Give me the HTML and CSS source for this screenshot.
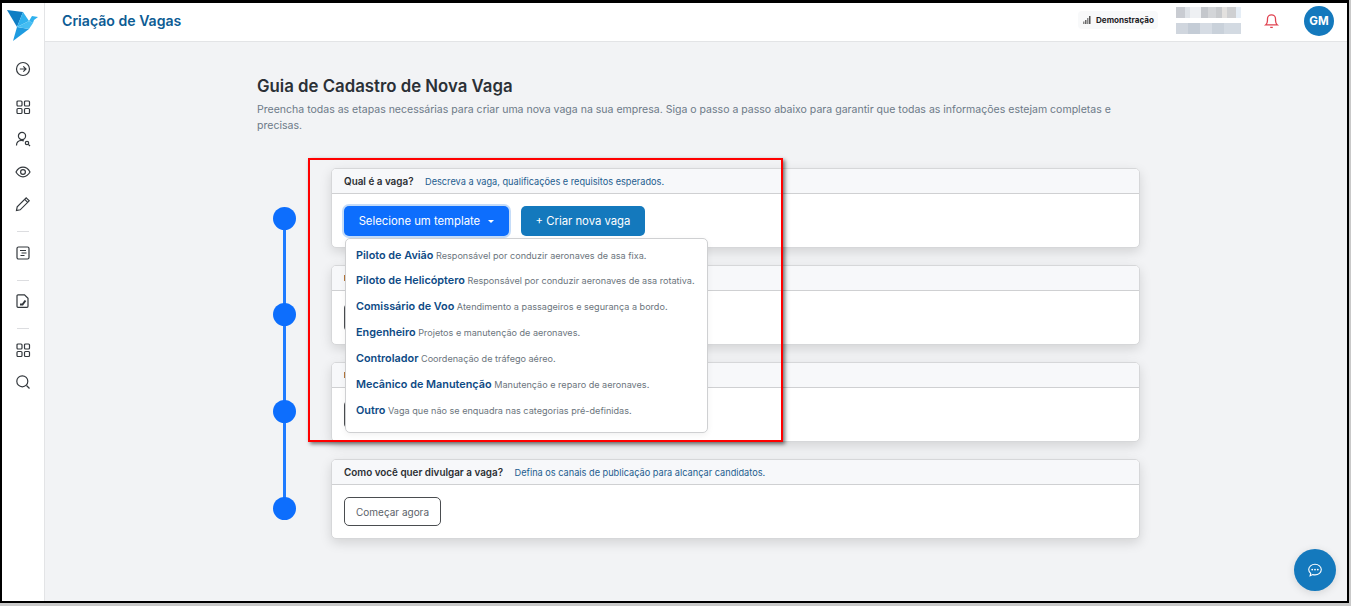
FILE: index.html
```html
<!doctype html>
<html lang="pt-BR">
<head>
    <meta charset="UTF-8">
    <title>Criação de Vagas</title>
    <link rel="stylesheet" href="styles.css">
</head>
<body>

<div class="screen">
    <aside class="sidebar">
        <svg class="logo" viewBox="0 0 32 32" width="32" height="32">
            <polygon points="1,1 17,3 11,18" fill="#0f7ec4"/>
            <polygon points="17,3 23,12 11,18" fill="#2fb1ee"/>
            <polygon points="11,18 7,32 23,20" fill="#1e9be0"/>
            <polygon points="23,12 11,18 23,20 27,14" fill="#45bdf2"/>
            <polygon points="23,12 26,7 32,8 28,11 27,14" fill="#2fb1ee"/>
        </svg>
        <svg class="ico first" viewBox="0 0 16 16"><circle cx="8" cy="8" r="6.5"/><path d="M4.8 8h6M8.3 5.3 11 8l-2.7 2.7"/></svg>
        <svg class="ico wide" viewBox="0 0 16 16"><rect x="2" y="2" width="5" height="5" rx="1"/><rect x="9.5" y="2" width="5" height="5" rx="1"/><rect x="2" y="9.5" width="5" height="5" rx="1"/><rect x="9.5" y="9.5" width="5" height="5" rx="1"/></svg>
        <svg class="ico" viewBox="0 0 16 16"><circle cx="7" cy="5" r="3.6"/><path d="M1.5 14.5c0-3 2-5.2 5-5.2 1 0 1.7.2 2.4.6"/><circle cx="12" cy="12" r="1.7"/><path d="M13.3 13.3 15 15"/></svg>
        <svg class="ico low" viewBox="0 0 16 16"><path d="M1 8c1.8-3.2 4.2-4.8 7-4.8s5.2 1.6 7 4.8c-1.8 3.2-4.2 4.8-7 4.8S2.8 11.2 1 8z"/><circle cx="8" cy="8" r="2.4"/></svg>
        <svg class="ico" viewBox="0 0 16 16"><path d="M11.2 1.8 14.2 4.8 5.2 13.8 1.5 14.5 2.2 10.8zM9.7 3.3l3 3"/></svg>
        <span class="rule"></span>
        <svg class="ico" viewBox="0 0 16 16"><rect x="2" y="2" width="12" height="12" rx="1.5"/><path d="M5 5.5h6M6.5 8h5M5.5 10.5h4"/></svg>
        <span class="rule"></span>
        <svg class="ico" viewBox="0 0 16 16"><path d="M3 1.8h6.5L13 5.3v8a1 1 0 0 1-1 1H3a1 1 0 0 1-1-1V2.8a1 1 0 0 1 1-1z"/><path class="thick" d="M5 11.5h2.5L10.5 7.5"/></svg>
        <span class="rule"></span>
        <svg class="ico" viewBox="0 0 16 16"><rect x="2" y="2" width="5" height="5" rx="1"/><rect x="9.5" y="2" width="5" height="5" rx="1"/><rect x="2" y="9.5" width="5" height="5" rx="1"/><rect x="9.5" y="9.5" width="5" height="5" rx="1"/></svg>
        <svg class="ico" viewBox="0 0 16 16"><circle cx="7.3" cy="7.3" r="5.5"/><path d="M11.5 11.5 14.5 14.5"/></svg>
    </aside>

    <div class="page">
        <header class="topbar">
            <h1 class="page-title">Criação de Vagas</h1>
            <div class="badge">
                <svg viewBox="0 0 8 8" width="8" height="8"><rect x="0" y="5.5" width="1.5" height="2.5" fill="#888"/><rect x="2" y="4" width="1.5" height="4" fill="#666"/><rect x="4" y="2" width="1.5" height="6" fill="#888"/><rect x="6" y="0" width="1.5" height="8" fill="#555"/></svg>
                Demonstração
            </div>
            <div class="blurred">
                <span class="blur-line one"></span>
                <span class="blur-line two"></span>
            </div>
            <svg class="bell" viewBox="0 0 16 16" width="17" height="17"><path d="M2.5 12.2c1.2-1 1.7-2.2 1.7-4.2V6.5a3.8 3.8 0 0 1 7.6 0V8c0 2 .5 3.2 1.7 4.2z"/><path d="M6.8 14.5h2.4"/></svg>
            <div class="avatar">GM</div>
        </header>

        <main class="content">
            <h2 class="guide-title">Guia de Cadastro de Nova Vaga</h2>
            <p class="guide-text">Preencha todas as etapas necessárias para criar uma nova vaga na sua empresa. Siga o passo a passo abaixo para garantir que todas as informações estejam completas e precisas.</p>

            <div class="steps">
                <section class="step">
                    <span class="dot"></span>
                    <div class="card">
                        <div class="card-head"><b>Qual é a vaga?</b><span>Descreva a vaga, qualificações e requisitos esperados.</span></div>
                        <div class="card-body">
                            <button class="btn btn-select">Selecione um template <i class="caret"></i></button>
                            <button class="btn btn-new">+ Criar nova vaga</button>
                        </div>
                    </div>
                </section>
                <section class="step">
                    <span class="dot"></span>
                    <div class="card">
                        <div class="card-head"><i class="sliver"></i></div>
                        <div class="card-body"><button class="btn btn-outline"></button></div>
                    </div>
                </section>
                <section class="step">
                    <span class="dot"></span>
                    <div class="card">
                        <div class="card-head"><i class="sliver"></i></div>
                        <div class="card-body"><button class="btn btn-outline"></button></div>
                    </div>
                </section>
                <section class="step">
                    <span class="dot"></span>
                    <div class="card">
                        <div class="card-head"><b>Como você quer divulgar a vaga?</b><span>Defina os canais de publicação para alcançar candidatos.</span></div>
                        <div class="card-body"><button class="btn btn-outline">Começar agora</button></div>
                    </div>
                </section>

                <ul class="menu">
                    <li><b>Piloto de Avião</b> Responsável por conduzir aeronaves de asa fixa.</li>
                    <li><b>Piloto de Helicóptero</b> Responsável por conduzir aeronaves de asa rotativa.</li>
                    <li><b>Comissário de Voo</b> Atendimento a passageiros e segurança a bordo.</li>
                    <li><b>Engenheiro</b> Projetos e manutenção de aeronaves.</li>
                    <li><b>Controlador</b> Coordenação de tráfego aéreo.</li>
                    <li><b>Mecânico de Manutenção</b> Manutenção e reparo de aeronaves.</li>
                    <li><b>Outro</b> Vaga que não se enquadra nas categorias pré-definidas.</li>
                </ul>
            </div>
        </main>
    </div>

    <button class="chat">
        <svg viewBox="0 0 16 16" width="16" height="16"><path d="M8 2.3c3.5 0 6.3 2.3 6.3 5.3S11.500 12.900 8 12.900c-.8 0-1.500-.1-2.200-.3l-2.700 1.200.6-2.400C2.500 10.400 1.700 9.100 1.700 7.600c0-3 2.800-5.300 6.300-5.300z"/><circle class="fill" cx="5.200" cy="7.600" r=".9"/><circle class="fill" cx="8" cy="7.600" r=".9"/><circle class="fill" cx="10.800" cy="7.600" r=".9"/></svg>
    </button>

    <div class="highlight"></div>
</div>

</body>
</html>
```

FILE: styles.css
```css
*{margin:0;padding:0;box-sizing:border-box;}
body{
    background:#c9c9c9;
    font-family:Inter,"Liberation Sans",sans-serif;
    overflow:hidden;
}
.screen{
    position:relative;
    display:flex;
    width:1349px;
    height:603px;
    border:2px solid #000;
    border-top-width:3px;
    background:#f2f3f5;
    overflow:hidden;
}

/* barra lateral */
.sidebar{
    display:flex;
    flex-direction:column;
    align-items:center;
    flex:none;
    width:43px;
    background:#fff;
    border-right:1px solid #e3e4e6;
}
.logo{margin:6px 3px 0 0;flex:none;}
.ico{
    flex:none;
    width:16px;
    height:16px;
    margin-top:16px;
    fill:none;
    stroke:#33383d;
    stroke-width:1.2;
}
.ico.first{margin-top:20px;}
.ico.wide{margin-top:22px;}
.ico.low{margin-top:17px;}
.ico .thick{stroke-width:2;}
.rule{
    flex:none;
    width:12px;
    height:1px;
    margin:19px 0 2.5px;
    background:#dcdde0;
}
.rule + .ico{margin-top:10px;}

/* topo */
.page{flex:1;min-width:0;display:flex;flex-direction:column;}
.topbar{
    display:flex;
    align-items:center;
    flex:none;
    height:39px;
    padding-left:17px;
    background:#fff;
    border-bottom:1px solid #e3e4e6;
}
.page-title{
    flex:1;
    margin-top:-4px;
    font-size:14.1px;
    font-weight:600;
    color:#0c5c94;
}
.badge{
    display:flex;
    align-items:center;
    gap:5px;
    width:80px;
    height:18px;
    margin-top:-5px;
    padding-left:5px;
    border-radius:4px;
    background:#f8f9fa;
    font-size:8.1px;
    font-weight:700;
    color:#1d2125;
}
.blurred{
    display:flex;
    flex-direction:column;
    gap:5px;
    width:65px;
    margin:-3px 0 0 18px;
}
.blur-line{
    display:block;
    height:11px;
    background:linear-gradient(90deg,#c9ccd2 0 9px,#dfe3e8 9px 14px,#eef0f3 14px 25px,#c4c7cc 25px 32px,#d3d5d8 32px 40px,#c8cacd 40px 46px,#e3e1df 46px 51px,#cfd0d2 51px 60px,#e6eef6 60px);
}
.blur-line.two{
    background:linear-gradient(90deg,#d0d6de 0 12px,#c4ccd6 12px 24px,#d6dce4 24px 36px,#c9d1da 36px 48px,#d3dae2 48px 65px);
}
.bell{
    flex:none;
    margin:-3px 0 0 22px;
    fill:none;
    stroke:#e0414f;
    stroke-width:1.2;
}
.avatar{
    display:flex;
    align-items:center;
    justify-content:center;
    flex:none;
    width:30px;
    height:30px;
    margin:-3px 13px 0 24px;
    border-radius:50%;
    background:#1479bd;
    color:#fff;
    font-size:11.5px;
    font-weight:700;
}

/* conteudo */
.content{padding:33px 0 0 212px;width:1095px;}
.guide-title{
    font-size:16.8px;
    font-weight:600;
    line-height:22px;
    color:#2b3036;
}
.guide-text{
    margin-top:5px;
    font-size:10.54px;
    line-height:16px;
    color:#6d7a88;
}
.steps{
    position:relative;
    display:flex;
    flex-direction:column;
    gap:17px;
    margin-top:34px;
}
/* linha que liga as etapas */
.steps::before{
    content:"";
    position:absolute;
    left:26px;
    top:50px;
    width:3px;
    height:290px;
    background:#1f7bff;
}
.step{display:flex;align-items:flex-start;}
.dot{
    position:relative;
    flex:none;
    width:23px;
    height:23px;
    margin:38px 35px 0 16px;
    border-radius:50%;
    background:#0d6efd;
}
.step:first-child .dot{margin-top:39px;}
.card{
    flex:none;
    width:809px;
    height:80px;
    border:1px solid #d6d7d9;
    border-radius:5px;
    background:#fff;
    box-shadow:0 4px 12px rgba(0,0,0,.13);
    overflow:hidden;
}
.card-head{
    display:flex;
    align-items:center;
    gap:11.5px;
    height:25px;
    padding:0 12px;
    background:#f7f8fa;
    border-bottom:1px solid #cfd0d2;
    font-size:9.2px;
    color:#1d5d8f;
}
.card-head b{font-size:9.9px;font-weight:600;color:#2b2f33;}
.sliver{display:block;width:3px;height:6px;background:#b5763a;}
.card-body{display:flex;gap:12px;padding:12px;}

.btn{
    height:30px;
    border:0;
    border-radius:5px;
    font-family:inherit;
    font-size:11.3px;
    color:#fff;
}
.btn-select{
    width:165px;
    background:#0d6efd;
    box-shadow:0 0 0 2px #c5dcf8;
}
.btn-new{width:124px;background:#1479bd;}
.btn-outline{
    width:97px;
    height:29px;
    border:1px solid #4a4d50;
    background:#fff;
    font-size:10px;
    color:#5b6269;
}
.caret{
    display:inline-block;
    margin-left:5px;
    vertical-align:2px;
    border:3.5px solid transparent;
    border-top-color:#fff;
    border-bottom:0;
}

/* menu aberto sobre as etapas */
.menu{
    position:absolute;
    left:88px;
    top:70px;
    width:363px;
    height:195px;
    padding:3px 10px;
    list-style:none;
    border:1px solid #cfd0d2;
    border-radius:5px;
    background:#fff;
    box-shadow:0 2px 6px rgba(0,0,0,.06);
}
.menu li{
    height:26px;
    line-height:26px;
    font-size:9.1px;
    color:#6c757d;
    white-space:nowrap;
}
.menu li:first-child{height:25px;}
.menu b{
    font-size:10.85px;
    font-weight:600;
    color:#0d4a85;
}

.chat{
    position:absolute;
    right:11px;
    bottom:10px;
    display:flex;
    align-items:center;
    justify-content:center;
    width:42px;
    height:42px;
    border:0;
    border-radius:50%;
    background:#1479bd;
    box-shadow:0 2px 8px rgba(0,0,0,.12);
}
.chat svg{fill:none;stroke:#fff;stroke-width:1.1;}
.chat .fill{fill:#fff;stroke:none;}

/* marcacao vermelha do print */
.highlight{
    position:absolute;
    left:306px;
    top:155px;
    width:475px;
    height:284px;
    border:2px solid #f00;
    box-shadow:2px 2px 4px rgba(0,0,0,.55);
}
```
